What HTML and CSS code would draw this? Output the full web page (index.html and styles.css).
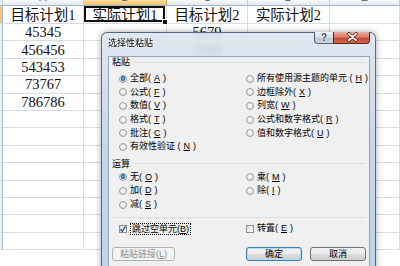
FILE: index.html
```html
<!DOCTYPE html>
<html lang="zh-CN">
<head>
  <meta charset="UTF-8">
  <title>选择性粘贴</title>
  <link rel="stylesheet" href="styles.css">
</head>
<body>
  <div class="sheet">
    <div class="row head">
      <div class="cell rh"></div>
      <div class="cell ca"><span>A</span></div>
      <div class="cell cb sel"><span>B</span></div>
      <div class="cell cc"><span>C</span></div>
      <div class="cell cd"><span>D</span></div>
      <div class="cell ce"><span>E</span></div>
    </div>
    <div class="row first">
      <div class="cell rh sel"></div>
      <div class="cell ca">目标计划1</div>
      <div class="cell cb active">实际计划1</div>
      <div class="cell cc">目标计划2</div>
      <div class="cell cd">实际计划2</div>
      <div class="cell ce"></div>
    </div>
    <div class="row">
      <div class="cell rh"></div>
      <div class="cell ca">45345</div>
      <div class="cell cb"></div>
      <div class="cell cc">5679</div>
      <div class="cell cd"></div>
      <div class="cell ce"></div>
    </div>
    <div class="row">
      <div class="cell rh"></div>
      <div class="cell ca">456456</div>
      <div class="cell cb"></div>
      <div class="cell cc">7689</div>
      <div class="cell cd"></div>
      <div class="cell ce"></div>
    </div>
    <div class="row">
      <div class="cell rh"></div>
      <div class="cell ca">543453</div>
      <div class="cell cb"></div>
      <div class="cell cc"></div>
      <div class="cell cd"></div>
      <div class="cell ce"></div>
    </div>
    <div class="row">
      <div class="cell rh"></div>
      <div class="cell ca">73767</div>
      <div class="cell cb"></div>
      <div class="cell cc"></div>
      <div class="cell cd"></div>
      <div class="cell ce"></div>
    </div>
    <div class="row">
      <div class="cell rh"></div>
      <div class="cell ca">786786</div>
      <div class="cell cb"></div>
      <div class="cell cc"></div>
      <div class="cell cd"></div>
      <div class="cell ce"></div>
    </div>
    <div class="row"><div class="cell rh"></div><div class="cell ca"></div><div class="cell cb"></div><div class="cell cc"></div><div class="cell cd"></div><div class="cell ce"></div></div>
    <div class="row"><div class="cell rh"></div><div class="cell ca"></div><div class="cell cb"></div><div class="cell cc"></div><div class="cell cd"></div><div class="cell ce"></div></div>
    <div class="row"><div class="cell rh"></div><div class="cell ca"></div><div class="cell cb"></div><div class="cell cc"></div><div class="cell cd"></div><div class="cell ce"></div></div>
    <div class="row"><div class="cell rh"></div><div class="cell ca"></div><div class="cell cb"></div><div class="cell cc"></div><div class="cell cd"></div><div class="cell ce"></div></div>
    <div class="row"><div class="cell rh"></div><div class="cell ca"></div><div class="cell cb"></div><div class="cell cc"></div><div class="cell cd"></div><div class="cell ce"></div></div>
    <div class="row"><div class="cell rh"></div><div class="cell ca"></div><div class="cell cb"></div><div class="cell cc"></div><div class="cell cd"></div><div class="cell ce"></div></div>
    <div class="row"><div class="cell rh"></div><div class="cell ca"></div><div class="cell cb"></div><div class="cell cc"></div><div class="cell cd"></div><div class="cell ce"></div></div>
    <div class="row"><div class="cell rh"></div><div class="cell ca"></div><div class="cell cb"></div><div class="cell cc"></div><div class="cell cd"></div><div class="cell ce"></div></div>
  </div>

  <div class="dialog">
    <div class="titlebar">
      <span class="title">选择性粘贴</span>
      <div class="caption">
        <span class="help">?</span>
        <span class="close">
          <svg width="37" height="12" viewBox="0 0 37 12">
            <path d="M15 3 L22 9 M22 3 L15 9" stroke="#5a1d12" stroke-width="3.6" stroke-linecap="round"/>
            <path d="M15 3 L22 9 M22 3 L15 9" stroke="#fff" stroke-width="2" stroke-linecap="round"/>
          </svg>
        </span>
      </div>
    </div>

    <div class="client">
      <div class="group-head"><span>粘贴</span><i></i></div>
      <div class="opts paste">
        <label class="opt"><span class="radio on"></span>全部(<u>A</u>)</label>
        <label class="opt"><span class="radio"></span>公式(<u>F</u>)</label>
        <label class="opt"><span class="radio"></span>数值(<u>V</u>)</label>
        <label class="opt"><span class="radio"></span>格式(<u>T</u>)</label>
        <label class="opt"><span class="radio"></span>批注(<u>C</u>)</label>
        <label class="opt"><span class="radio"></span>有效性验证 (<u>N</u>)</label>
        <label class="opt"><span class="radio"></span>所有使用源主题的单元 (<u>H</u>)</label>
        <label class="opt"><span class="radio"></span>边框除外(<u>X</u>)</label>
        <label class="opt"><span class="radio"></span>列宽(<u>W</u>)</label>
        <label class="opt"><span class="radio"></span>公式和数字格式(<u>R</u>)</label>
        <label class="opt"><span class="radio"></span>值和数字格式(<u>U</u>)</label>
      </div>

      <div class="group-head op"><span>运算</span><i></i></div>
      <div class="opts ops">
        <label class="opt"><span class="radio on"></span>无(<u>O</u>)</label>
        <label class="opt"><span class="radio"></span>加(<u>D</u>)</label>
        <label class="opt"><span class="radio"></span>减(<u>S</u>)</label>
        <label class="opt"><span class="radio"></span>乘(<u>M</u>)</label>
        <label class="opt"><span class="radio"></span>除(<u>I</u>)</label>
      </div>

      <div class="sep"></div>

      <div class="opts checks">
        <label class="opt"><span class="check"><svg width="8" height="8" viewBox="0 0 8 8"><path d="M1.5 4.2 L3.2 6.3 L6.6 1.4" fill="none" stroke="#2458a8" stroke-width="1.4"/></svg></span><span class="focus">跳过空单元(<u>B</u>)</span></label>
        <label class="opt"><span class="check"></span>转置(<u>E</u>)</label>
      </div>

      <div class="buttons">
        <button class="btn link" disabled>粘贴链接(<u>L</u>)</button>
        <button class="btn default">确定</button>
        <button class="btn">取消</button>
      </div>
    </div>
  </div>
</body>
</html>
```

FILE: styles.css
```css
body {
  margin: 0;
  width: 400px;
  height: 266px;
  overflow: hidden;
  background: #fff;
  font-family: "Liberation Serif", "Noto Sans CJK SC", serif;
}

/* spreadsheet */
.sheet {
  width: 400px;
}

.row {
  display: flex;
  height: 17.4px;
}

.cell {
  box-sizing: border-box;
  flex: none;
  border-right: 1px solid #d5dde8;
  border-bottom: 1px solid #d5dde8;
  font-size: 14.5px;
  line-height: 16px;
  color: #111;
  text-align: center;
  display: flex;
  align-items: center;
  justify-content: center;
  white-space: nowrap;
}

.rh { width: 3px; background: #e9eef5; border-right-color: #9eb6ce; }
.ca { width: 81px; }
.cb { width: 83px; }
.cc { width: 81px; }
.cd { width: 82px; }
.ce { width: 70px; }

.row.head {
  height: 6px;
}

.head .cell {
  overflow: hidden;
  align-items: flex-start;
  background: linear-gradient(#f9fafc, #e3e8ef);
  border-right-color: #c3cedc;
  border-bottom-color: #9eb6ce;
  font-family: "Liberation Sans", sans-serif;
  font-size: 11px;
  color: #4c5866;
}

.head .cell span {
  display: block;
  line-height: 12px;
  margin-top: -9px;
}

.head .cell.sel {
  background: linear-gradient(#fbe0a8, #f3c263);
  border-right-color: #c8a05a;
}

.head .rh {
  background: #e9eef5;
}

.row.first {
  height: 18px;
}

.rh.sel {
  background: #f6c877;
}

.active {
  position: relative;
}

.active::after {
  content: "";
  position: absolute;
  left: 0;
  top: 0;
  right: 1px;
  bottom: 1px;
  border: 2px solid #111;
}

.active::before {
  content: "";
  position: absolute;
  right: -2px;
  bottom: -2px;
  width: 4px;
  height: 4px;
  background: #111;
  border: 1px solid #fff;
  z-index: 1;
}

/* dialog */
.dialog {
  position: absolute;
  left: 101px;
  top: 32px;
  width: 275px;
  height: 240px;
  box-sizing: border-box;
  display: flex;
  flex-direction: column;
  padding: 0 5px 0 6px;
  border: 1px solid rgba(60, 78, 100, 0.8);
  border-radius: 6px 6px 0 0;
  background: linear-gradient(rgba(220, 228, 238, 0.86), rgba(196, 213, 233, 0.92) 40%, rgba(188, 208, 232, 0.94));
  backdrop-filter: blur(2px);
  box-shadow: 0 0 6px rgba(0, 0, 0, 0.35);
  font-family: "Liberation Sans", "Noto Sans CJK SC", sans-serif;
  font-size: 9px;
  color: #000;
  text-autospace: no-autospace;
}

.titlebar {
  height: 23px;
  display: flex;
  align-items: flex-start;
}

.title {
  margin-top: 4px;
  line-height: 12px;
  text-shadow: 0 0 3px #fff, 0 0 2px #fff;
}

.caption {
  margin-left: auto;
  margin-top: -1px;
  display: flex;
}

.help,
.close {
  box-sizing: border-box;
  height: 12px;
  border: 1px solid rgba(50, 60, 75, 0.8);
  border-top: none;
}

.help {
  width: 19px;
  border-right: none;
  border-radius: 0 0 0 4px;
  background: linear-gradient(#eef2f6, #d2dbe5 50%, #b9c6d4 51%, #c9d6e3);
  font-size: 10px;
  font-weight: bold;
  line-height: 11px;
  text-align: center;
  color: #3c4654;
  text-shadow: 0 0 2px #fff;
}

.close {
  width: 37px;
  border-color: #5e231a;
  border-radius: 0 0 4px 0;
  background: linear-gradient(#eab0a3, #d7735f 50%, #c4432d 51%, #d16a4f);
}

.close svg {
  display: block;
  margin-top: -1px;
}

.client {
  flex: 1;
  background: #f0f0f0;
  border: 1px solid #97a5b8;
  border-bottom: none;
}

.group-head {
  display: flex;
  align-items: center;
  height: 10px;
  line-height: 10px;
  padding: 0 3px;
}

.group-head i {
  flex: 1;
  height: 1px;
  margin-left: 3px;
  background: #d5dfe5;
}

.group-head.op {
  margin-top: 5px;
}

.opts {
  display: grid;
  grid-template-columns: 127px 1fr;
  grid-auto-flow: column;
  padding-left: 10px;
}

.paste {
  margin-top: 5px;
  grid-template-rows: repeat(6, 13.6px);
}

.ops {
  margin-top: 2px;
  grid-template-rows: repeat(3, 13.6px);
}

.checks {
  margin-top: 4.2px;
  grid-template-rows: 13.6px;
}

.opt {
  display: flex;
  align-items: center;
  gap: 3px;
  white-space: nowrap;
  line-height: 11px;
}

.opt u {
  text-decoration-thickness: 0.5px;
  text-underline-offset: 1px;
}

.radio {
  box-sizing: border-box;
  width: 8px;
  height: 8px;
  flex: none;
  border-radius: 50%;
  border: 1px solid #969a9e;
  background: radial-gradient(circle at 50% 35%, #fdfdfd, #dcdcdc);
}

.radio.on {
  background:
    radial-gradient(circle at 50% 42%, #9fd4f7 0, #3b86cc 1.2px, #1d5c9e 2.2px, transparent 2.6px),
    radial-gradient(circle at 50% 35%, #fdfdfd, #dcdcdc);
}

.check {
  box-sizing: border-box;
  width: 8px;
  height: 8px;
  flex: none;
  border: 1px solid #8f8f8f;
  background: linear-gradient(135deg, #dedede, #fbfbfb);
}

.check svg {
  display: block;
  margin: -1px;
}

.focus {
  border: 1px dotted #000;
  padding: 0 1px;
  line-height: 10px;
}

.sep {
  height: 1px;
  margin: 5.6px 3px 0;
  background: #d5dfe5;
}

.buttons {
  display: flex;
  gap: 8px;
  padding: 0 3px;
  margin-top: 11.2px;
}

.btn {
  box-sizing: border-box;
  width: 56px;
  height: 14px;
  padding: 0;
  border: 1px solid #707070;
  border-radius: 3px;
  background: linear-gradient(#f4f4f4, #ebebeb 48%, #dcdcdc 52%, #cfcfcf);
  font-family: "Liberation Sans", "Noto Sans CJK SC", sans-serif;
  font-size: 9px;
  line-height: 12px;
  color: #000;
}

.btn.link {
  width: 63px;
  margin-right: auto;
  border-color: #adb2b5;
  background: #f4f4f4;
  color: #8c8c8c;
}

.btn.default {
  border-color: #3c7fb1;
  box-shadow: inset 0 0 0 1px #a8def7;
}
```
